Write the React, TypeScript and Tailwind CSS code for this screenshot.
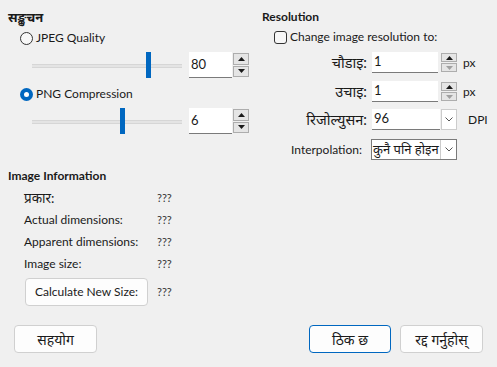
import React from "react";

const font = 'Lato, "Noto Sans", "Noto Sans Devanagari", "Lohit Devanagari", sans-serif';

function Radio({ checked }: { checked?: boolean }) {
  return checked ? (
    <span className="w-[13px] h-[13px] rounded-full bg-[#0067c0] flex items-center justify-center shrink-0">
      <span className="w-[5px] h-[5px] rounded-full bg-white" />
    </span>
  ) : (
    <span className="w-[13px] h-[13px] rounded-full border border-[#333333] bg-[#f7f7f7] shrink-0" />
  );
}

function Arrow({ up, dim }: { up?: boolean; dim?: boolean }) {
  return (
    <svg width="7" height="4" viewBox="0 0 7 4">
      <path d={up ? "M0 4 L3.5 0 L7 4 Z" : "M0 0 L3.5 4 L7 0 Z"} fill={dim ? "#a0a0a0" : "#1a1a1a"} />
    </svg>
  );
}

function SpinButtons({ dimDown }: { dimDown?: boolean }) {
  return (
    <div className="w-[16px] h-full flex flex-col gap-[1px] py-[1px]">
      <div className="flex-1 border border-[#adadad] bg-[#e5e5e5] flex items-center justify-center">
        <Arrow up />
      </div>
      <div className="flex-1 border border-[#adadad] bg-[#e5e5e5] flex items-center justify-center">
        <Arrow dim={dimDown} />
      </div>
    </div>
  );
}

function Chevron() {
  return (
    <svg width="8" height="5" viewBox="0 0 8 5">
      <path d="M0.5 0.5 L4 4 L7.5 0.5" fill="none" stroke="#555" strokeWidth="1" />
    </svg>
  );
}

function SliderRow({ value, pos }: { value: string; pos: number }) {
  return (
    <div className="flex items-center h-[26px] pl-[24px]">
      <div className="relative w-[150px] h-[26px]">
        <div className="absolute left-0 right-0 top-[12px] h-[4px] bg-[#e4e4e4] border-y border-[#d6d6d6]" />
        <div className="absolute top-0 w-[5px] h-[26px] bg-[#0067c0]" style={{ left: pos }} />
      </div>
      <div className="ml-[7px] w-[43px] h-[26px] bg-white border-b border-[#7a7a7a] flex items-center pl-[2px] text-[13px]">
        {value}
      </div>
      <div className="ml-[1px] h-[26px]">
        <SpinButtons />
      </div>
    </div>
  );
}

function Button({ label, w, primary }: { label: string; w: string; primary?: boolean }) {
  return (
    <div
      className={`${w} h-[28px] rounded-[4px] bg-[#fdfdfd] border flex items-center justify-center text-[14px] ${
        primary ? "border-[#0067c0]" : "border-[#d0d0d0]"
      }`}
    >
      {label}
    </div>
  );
}

export default function App() {
  const info = [
    { label: "प्रकार:", value: "???", deva: true },
    { label: "Actual dimensions:", value: "???" },
    { label: "Apparent dimensions:", value: "???" },
    { label: "Image size:", value: "???" },
  ];

  return (
    <div
      className="w-[497px] h-[367px] bg-[#f0f0f0] text-[12px] text-[#1a1a1a] overflow-hidden"
      style={{ fontFamily: font }}
    >
      {/* Top: compression + resolution */}
      <div className="flex pl-[8px] pt-[9px]">
        <div className="w-[254px]">
          <div className="h-[16px] leading-[16px] font-bold text-[13px]">सङ्कुचन</div>
          <div className="mt-[4px] h-[18px] flex items-center pl-[12px] gap-[3px]">
            <Radio />
            <span>JPEG Quality</span>
          </div>
          <div className="mt-[5px]">
            <SliderRow value="80" pos={114} />
          </div>
          <div className="mt-[7px] h-[18px] flex items-center pl-[12px] gap-[3px]">
            <Radio checked />
            <span>PNG Compression</span>
          </div>
          <div className="mt-[5px]">
            <SliderRow value="6" pos={88} />
          </div>
        </div>

        <div className="flex-1">
          <div className="h-[16px] leading-[16px] font-bold">Resolution</div>
          <div className="mt-[3px] h-[18px] flex items-center pl-[12px] gap-[3px]">
            <span className="w-[13px] h-[13px] rounded-[3px] border border-[#333333] bg-[#f7f7f7] shrink-0" />
            <span>Change image resolution to:</span>
          </div>

          <div className="mt-[6px] h-[21px] flex items-center">
            <div className="w-[105px] text-right text-[14.5px] leading-[21px]">चौडाइ:</div>
            <div className="ml-[5px] w-[66px] h-full bg-white border-b border-[#7a7a7a] flex items-center pl-[2px] text-[13px]">1</div>
            <div className="ml-[3px] h-full">
              <SpinButtons dimDown />
            </div>
            <div className="ml-[6px]">px</div>
          </div>

          <div className="mt-[8px] h-[21px] flex items-center">
            <div className="w-[105px] text-right text-[14.5px] leading-[21px]">उचाइ:</div>
            <div className="ml-[5px] w-[66px] h-full bg-white border-b border-[#7a7a7a] flex items-center pl-[2px] text-[13px]">1</div>
            <div className="ml-[3px] h-full">
              <SpinButtons dimDown />
            </div>
            <div className="ml-[6px]">px</div>
          </div>

          <div className="mt-[7px] h-[21px] flex items-center">
            <div className="w-[105px] text-right text-[14.5px] leading-[21px]">रिजोल्युसन:</div>
            <div className="ml-[5px] w-[68px] h-full bg-white border-b border-[#7a7a7a] flex items-center pl-[2px] text-[13px]">96</div>
            <div className="ml-[1px] w-[16px] h-full bg-white border border-[#cccccc] flex items-center justify-center">
              <Chevron />
            </div>
            <div className="ml-[11px]">DPI</div>
          </div>

          <div className="mt-[9px] h-[21px] flex items-center">
            <div className="w-[100px] text-right">Interpolation:</div>
            <div className="ml-[9px] w-[86px] h-full bg-white border border-[#7a7a7a] flex items-center">
              <span className="flex-1 pl-[1px] whitespace-nowrap overflow-hidden text-[13px]">कुनै पनि होइन</span>
              <div className="w-[16px] h-[19px] border-l border-[#cccccc] flex items-center justify-center">
                <Chevron />
              </div>
            </div>
          </div>
        </div>
      </div>

      {/* Image information */}
      <div className="pl-[8px] mt-[8px]">
        <div className="h-[16px] leading-[16px] font-bold">Image Information</div>
        <div className="mt-[3px] pl-[16px]">
          {info.map((row) => (
            <div key={row.label} className="h-[22px] flex items-center">
              <span className={row.deva ? "w-[133px] text-[13.5px]" : "w-[133px]"}>{row.label}</span>
              <span className="text-[11px] text-[#333]">{row.value}</span>
            </div>
          ))}
          <div className="mt-[3px] flex items-center">
            <div className="ml-[1px] w-[123px] h-[28px] rounded-[4px] bg-[#fdfdfd] border border-[#d0d0d0] flex items-center justify-center">
              Calculate New Size:
            </div>
            <span className="ml-[9px] text-[11px] text-[#333]">???</span>
          </div>
        </div>
      </div>

      {/* Bottom buttons */}
      <div className="mt-[19px] px-[14px] flex items-center">
        <Button label="सहयोग" w="w-[83px]" />
        <div className="flex-1" />
        <div className="flex gap-[9px]">
          <Button label="ठिक छ" w="w-[82px]" primary />
          <Button label="रद्द गर्नुहोस्" w="w-[83px]" />
        </div>
      </div>
    </div>
  );
}
